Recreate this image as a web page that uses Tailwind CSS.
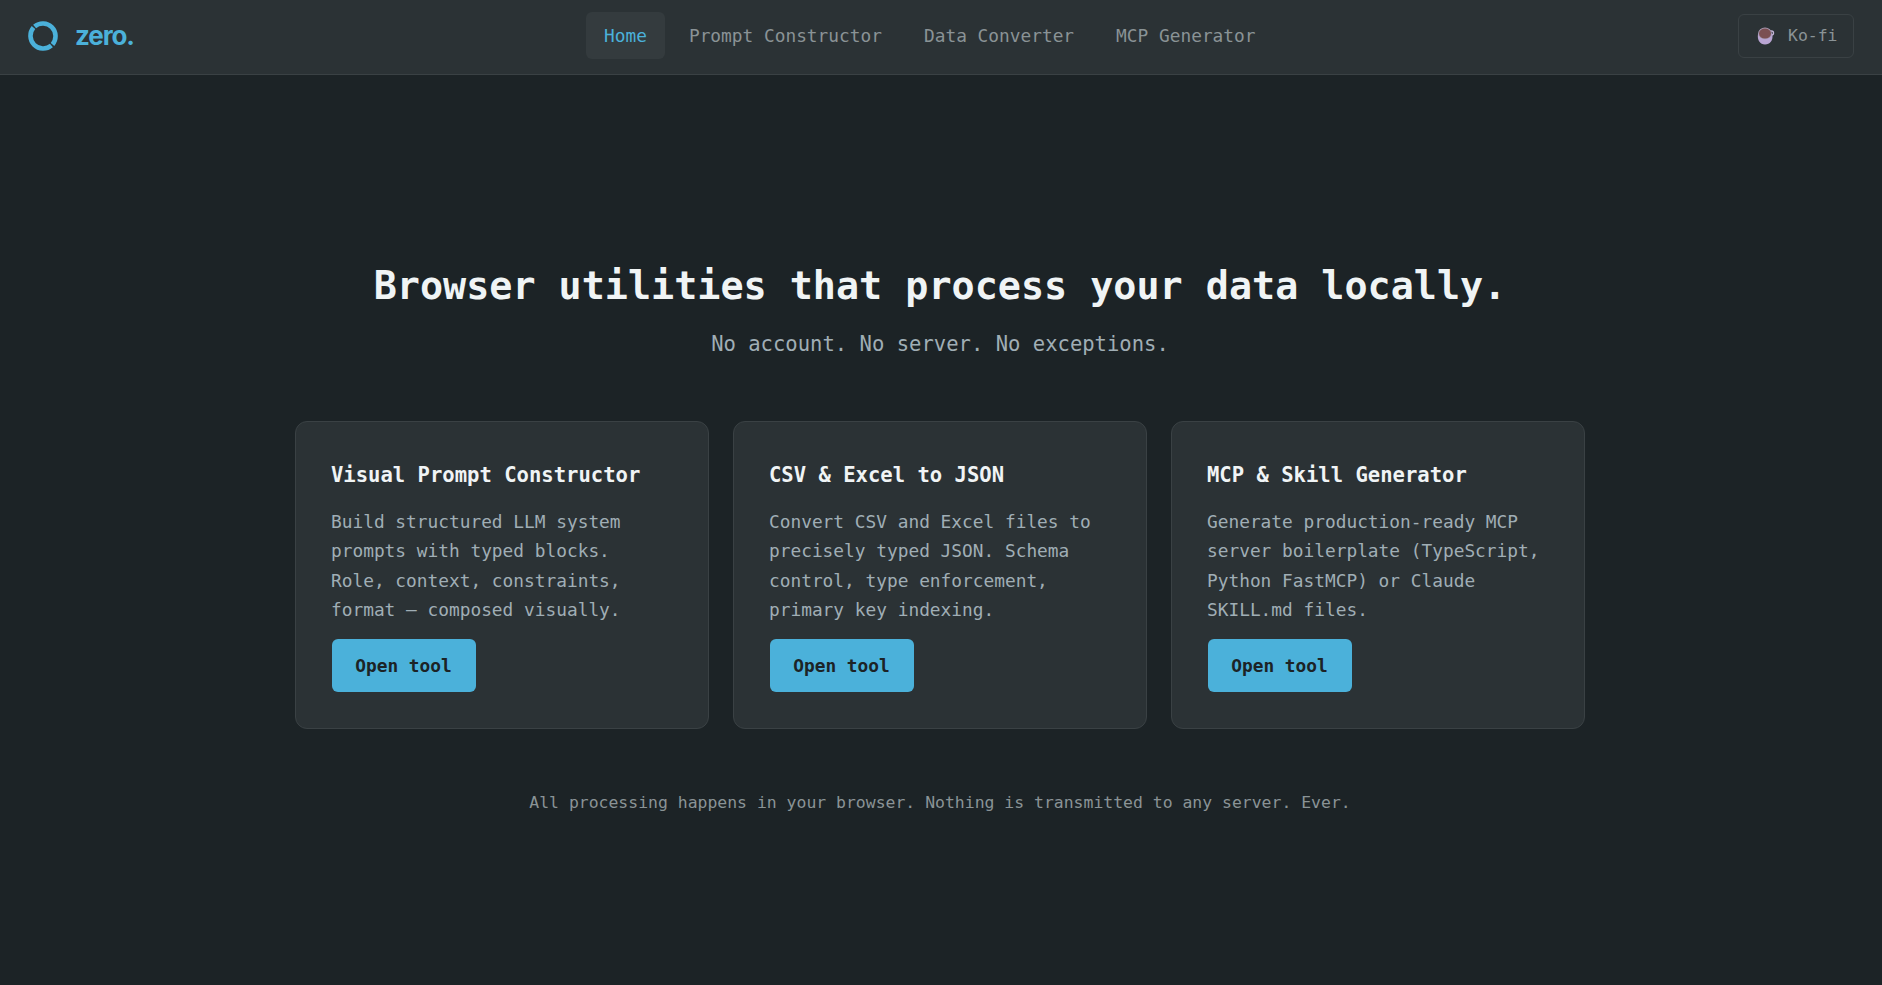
<!DOCTYPE html>
<html lang="en">
<head>
    <meta charset="UTF-8">
    <meta name="viewport" content="width=device-width, initial-scale=1.0">
    <title>zero.</title>
    <!-- Tailwind CSS -->
    <script src="https://cdn.jsdelivr.net/npm/@tailwindcss/browser@4"></script>
</head>
<body class="min-h-screen overflow-hidden bg-[#1c2326] font-['Consolas','DejaVu_Sans_Mono',monospace] text-[17.82px] text-[#a0aeb5]">
    <header class="flex h-[75px] items-center border-b border-[#3a4144] bg-[#2b3235] px-7 pb-[3px]">
        <a href="#" class="flex w-[558px] items-center gap-[17px] text-[#4bb1da]">
            <svg class="size-[30px]" viewBox="0 0 30 30" fill="none" stroke="currentColor" stroke-width="4.6">
                <path d="M6.6 5.5A12.7 12.7 0 0 1 24.5 23.4"/>
                <path d="M23.4 24.5A12.7 12.7 0 0 1 5.5 6.6"/>
            </svg>
            <span class="font-['Inter',sans-serif] text-[26px] leading-none font-bold tracking-[-1.1px]">zero.</span>
        </a>
        <nav class="flex items-center gap-1.5 text-[#8a9396]">
            <a href="#" class="flex h-[47px] items-center rounded-md bg-[#343b3e] px-[18px] pt-px text-[#4bb1da]">Home</a>
            <a href="#" class="flex h-[47px] items-center rounded-md px-[18px] pt-px">Prompt Constructor</a>
            <a href="#" class="flex h-[47px] items-center rounded-md px-[18px] pt-px">Data Converter</a>
            <a href="#" class="flex h-[47px] items-center rounded-md px-[18px] pt-px">MCP Generator</a>
        </nav>
        <a href="#" class="ml-auto flex h-11 w-[116px] items-center rounded-md border border-[#3a4144] pt-px pl-[18px] text-[16.45px] text-[#8a9396]">
            <svg class="mr-[13px] size-[18px]" viewBox="0 0 18 18">
                <circle cx="14.5" cy="6" r="2" fill="none" stroke="#c4b5d8" stroke-width="1.4"/>
                <path d="M1 7C0 13 3 17.5 8 17.5c5 0 8-4 7.5-9.5L13 4z" fill="#b9a5d3"/>
                <ellipse cx="8" cy="6.3" rx="6.9" ry="5.9" fill="#a99bb5"/>
                <ellipse cx="8" cy="6.6" rx="6" ry="5" fill="#7b4f52"/>
            </svg>
            <span>Ko-fi</span>
        </a>
    </header>

    <main class="mx-auto w-[1290px] -translate-x-px pt-[179px]">
        <h1 class="text-center text-[38.4px] leading-[63px] font-bold whitespace-nowrap text-[#f0f4f5]">Browser utilities that process your data locally.</h1>
        <p class="mt-[10px] text-center text-[20.55px] leading-[35px]">No account. No server. No exceptions.</p>

        <div class="mt-[59px] grid grid-cols-3 gap-6">
            <section class="h-[308px] rounded-xl border border-[#3a4144] bg-[#2b3235] p-9">
                <h2 class="-ml-px text-[20.55px] leading-[35px] font-bold text-[#f0f4f5]">Visual Prompt Constructor</h2>
                <p class="-ml-px mt-3.5 leading-[29.25px]">Build structured LLM system<br>prompts with typed blocks.<br>Role, context, constraints,<br>format — composed visually.</p>
                <a href="#" class="mt-[15px] flex h-[53px] w-36 items-center justify-center rounded-md bg-[#4bb1da] pt-px pr-px font-bold text-[#1c2326]">Open tool</a>
            </section>
            <section class="h-[308px] rounded-xl border border-[#3a4144] bg-[#2b3235] p-9">
                <h2 class="-ml-px text-[20.55px] leading-[35px] font-bold text-[#f0f4f5]">CSV &amp; Excel to JSON</h2>
                <p class="-ml-px mt-3.5 leading-[29.25px]">Convert CSV and Excel files to<br>precisely typed JSON. Schema<br>control, type enforcement,<br>primary key indexing.</p>
                <a href="#" class="mt-[15px] flex h-[53px] w-36 items-center justify-center rounded-md bg-[#4bb1da] pt-px pr-px font-bold text-[#1c2326]">Open tool</a>
            </section>
            <section class="h-[308px] rounded-xl border border-[#3a4144] bg-[#2b3235] p-9">
                <h2 class="-ml-px text-[20.55px] leading-[35px] font-bold text-[#f0f4f5]">MCP &amp; Skill Generator</h2>
                <p class="-ml-px mt-3.5 leading-[29.25px]">Generate production-ready MCP<br>server boilerplate (TypeScript,<br>Python FastMCP) or Claude<br>SKILL.md files.</p>
                <a href="#" class="mt-[15px] flex h-[53px] w-36 items-center justify-center rounded-md bg-[#4bb1da] pt-px pr-px font-bold text-[#1c2326]">Open tool</a>
            </section>
        </div>

        <p class="mt-[60px] text-center text-[16.45px] leading-[27px] text-[#8a9396]">All processing happens in your browser. Nothing is transmitted to any server. Ever.</p>
    </main>
</body>
</html>
